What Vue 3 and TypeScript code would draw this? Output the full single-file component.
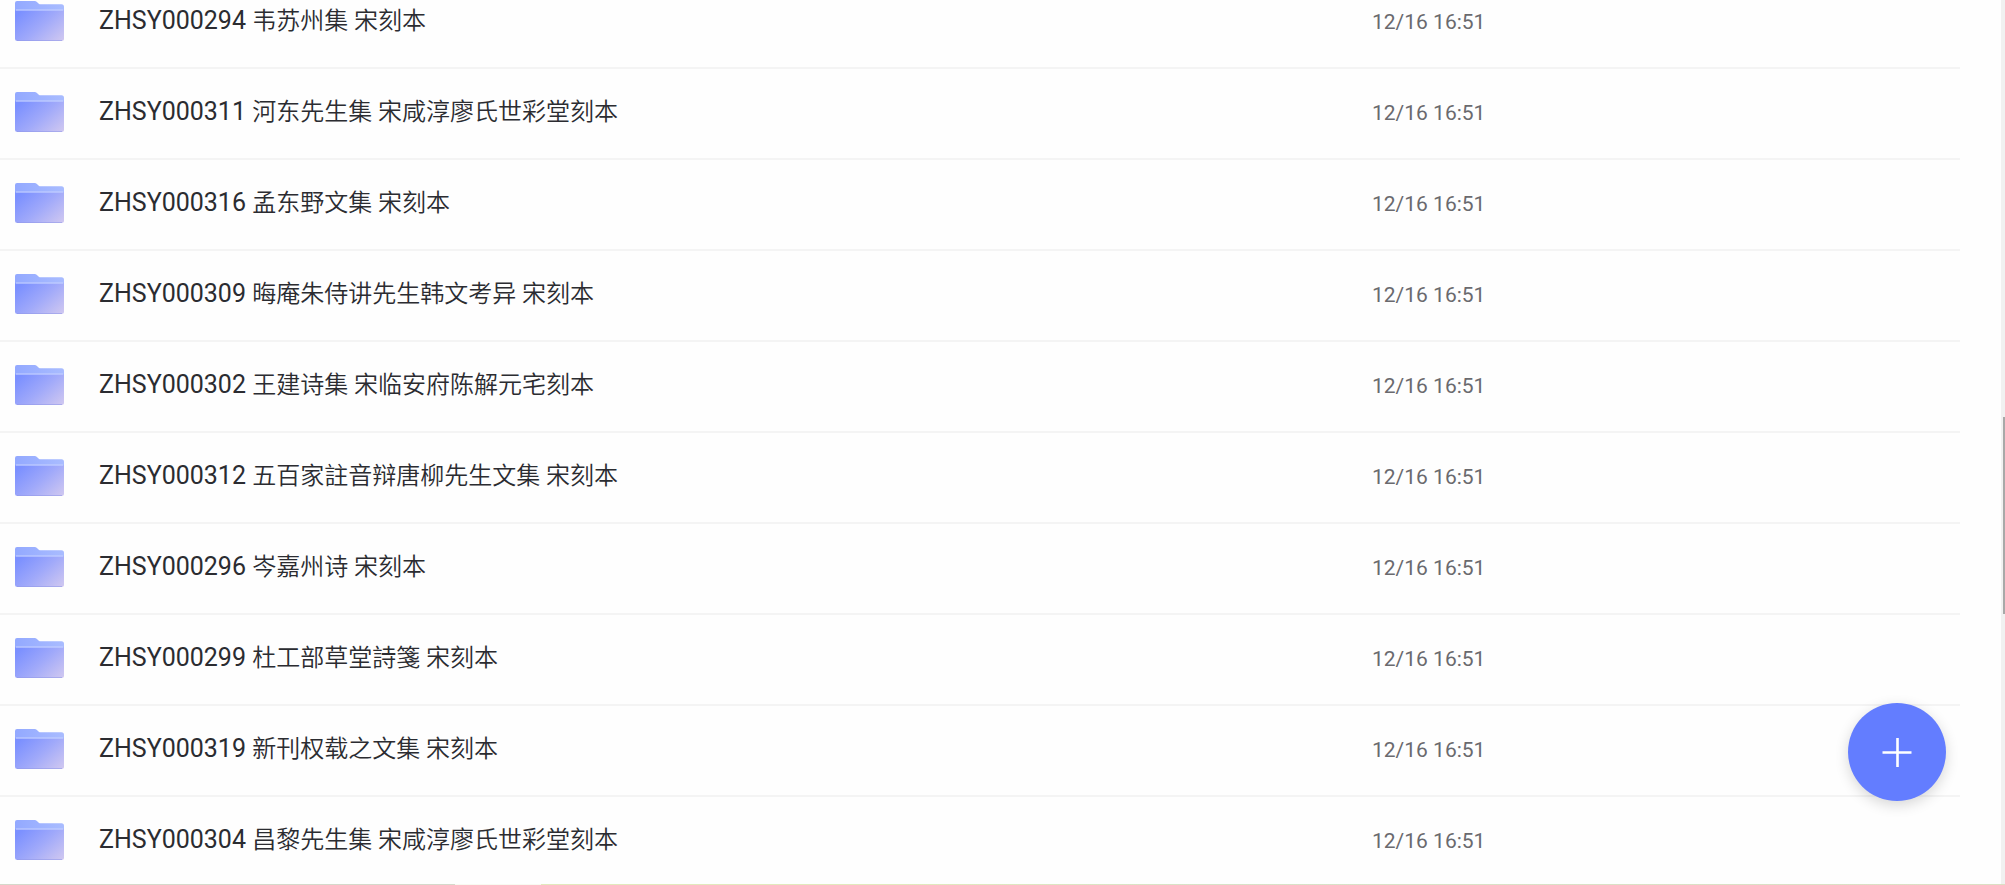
<script setup lang="ts">
interface Folder {
  code: string
  title: string
  modified: string
}

const modified = '12/16 16:51'

const folders: Folder[] = [
  { code: 'ZHSY000294', title: '韦苏州集 宋刻本', modified },
  { code: 'ZHSY000311', title: '河东先生集 宋咸淳廖氏世彩堂刻本', modified },
  { code: 'ZHSY000316', title: '孟东野文集 宋刻本', modified },
  { code: 'ZHSY000309', title: '晦庵朱侍讲先生韩文考异 宋刻本', modified },
  { code: 'ZHSY000302', title: '王建诗集 宋临安府陈解元宅刻本', modified },
  { code: 'ZHSY000312', title: '五百家註音辩唐柳先生文集 宋刻本', modified },
  { code: 'ZHSY000296', title: '岑嘉州诗 宋刻本', modified },
  { code: 'ZHSY000299', title: '杜工部草堂詩箋 宋刻本', modified },
  { code: 'ZHSY000319', title: '新刊权载之文集 宋刻本', modified },
  { code: 'ZHSY000304', title: '昌黎先生集 宋咸淳廖氏世彩堂刻本', modified },
]
</script>

<template>
  <main class="drive">
    <svg class="defs" aria-hidden="true">
      <defs>
        <linearGradient id="folder-back" x1="0" y1="0" x2="1" y2="0">
          <stop offset="0" stop-color="#93a9ff" />
          <stop offset="1" stop-color="#a9bcff" />
        </linearGradient>
        <linearGradient id="folder-front" x1="0" y1="0.2" x2="1" y2="0.9">
          <stop offset="0" stop-color="#7b90ff" />
          <stop offset="0.5" stop-color="#a0a9fa" />
          <stop offset="1" stop-color="#cdc6f1" />
        </linearGradient>
      </defs>
    </svg>
    <ul class="list">
      <li v-for="folder in folders" :key="folder.code" class="row">
        <svg class="folder" viewBox="0 0 49 40" aria-hidden="true">
          <path
            d="M2 0H19.500Q21 0 22.200 1.200L23.500 2.400Q24.500 3.300 26 3.300H46.500Q49 3.300 49 5.800V20H0V2Q0 0 2 0Z"
            fill="url(#folder-back)"
          />
          <path d="M0 9.500H49V37.500Q49 40 46.500 40H2.500Q0 40 0 37.500Z" fill="url(#folder-front)" />
          <path d="M1 9H48" stroke="#c7d2ff" stroke-width="1.200" />
          <path d="M2 39.500H47" stroke="#9299ea" stroke-opacity=".6" />
        </svg>
        <a class="name" href="#">
          <span>{{ folder.code }}</span>
          {{ ' ' }}<span class="title">{{ folder.title }}</span>
        </a>
        <time class="date">{{ folder.modified }}</time>
      </li>
    </ul>
    <div class="track"><div class="thumb"></div></div>
    <button class="fab" type="button" aria-label="新建">
      <svg viewBox="0 0 30 30" aria-hidden="true">
        <path d="M0.500 15.500H29.500M15.500 1V30" stroke="#fff" stroke-width="2.600" />
      </svg>
    </button>
    <div class="edge"></div>
  </main>
</template>

<style>
html,
body {
  height: 100%;
  overflow: hidden;
  background: #fefefe;
}
#app {
  height: 100%;
}
</style>

<style scoped>
.drive {
  position: relative;
  display: flex;
  justify-content: space-between;
  height: 100%;
  overflow: hidden;
  font-family: Roboto, 'Noto Sans CJK SC', sans-serif;
}
.defs {
  position: absolute;
  width: 0;
  height: 0;
}
.list {
  flex: 1;
  margin: -22px 41px 0 0;
  padding: 0;
  list-style: none;
}
.row {
  display: grid;
  grid-template-columns: 49px minmax(0, 1238px) 1fr;
  column-gap: 35px;
  align-items: center;
  box-sizing: border-box;
  height: 91px;
  padding: 0 0 4px 15px;
  border-bottom: 2px solid #f4f4f4;
}
.folder {
  display: block;
  width: 49px;
  height: 40px;
}
.name {
  color: #2b2c31;
  font-size: 25px;
  line-height: 32px;
  text-decoration: none;
  white-space: nowrap;
}
.title {
  font-size: 24px;
  font-weight: 350;
}
.date {
  padding-top: 2px;
  color: #6a6a6e;
  font-size: 21px;
  line-height: 28px;
}
.track {
  width: 4px;
  background: #f1f1f1;
}
.thumb {
  width: 2px;
  height: 22.260%;
  margin: 417px 0 0 2px;
  background: #a8a8a8;
}
.fab {
  position: absolute;
  right: 59px;
  bottom: 84px;
  display: grid;
  place-items: center;
  width: 98px;
  height: 98px;
  padding: 0;
  border: 0;
  border-radius: 50%;
  background: #637dff;
  box-shadow: 0 4px 14px rgba(0, 0, 0, 0.16);
  cursor: pointer;
}
.fab svg {
  width: 30px;
  height: 30px;
}
.edge {
  position: absolute;
  right: 0;
  bottom: 0;
  left: 0;
  height: 1px;
  background: linear-gradient(
    90deg,
    #d5d9cb 0 22.700%,
    #f8f9f0 22.700% 27%,
    #e2e9bd 27% 45%,
    #d8e2c8 60%,
    #dcdfc4
  );
}
</style>
